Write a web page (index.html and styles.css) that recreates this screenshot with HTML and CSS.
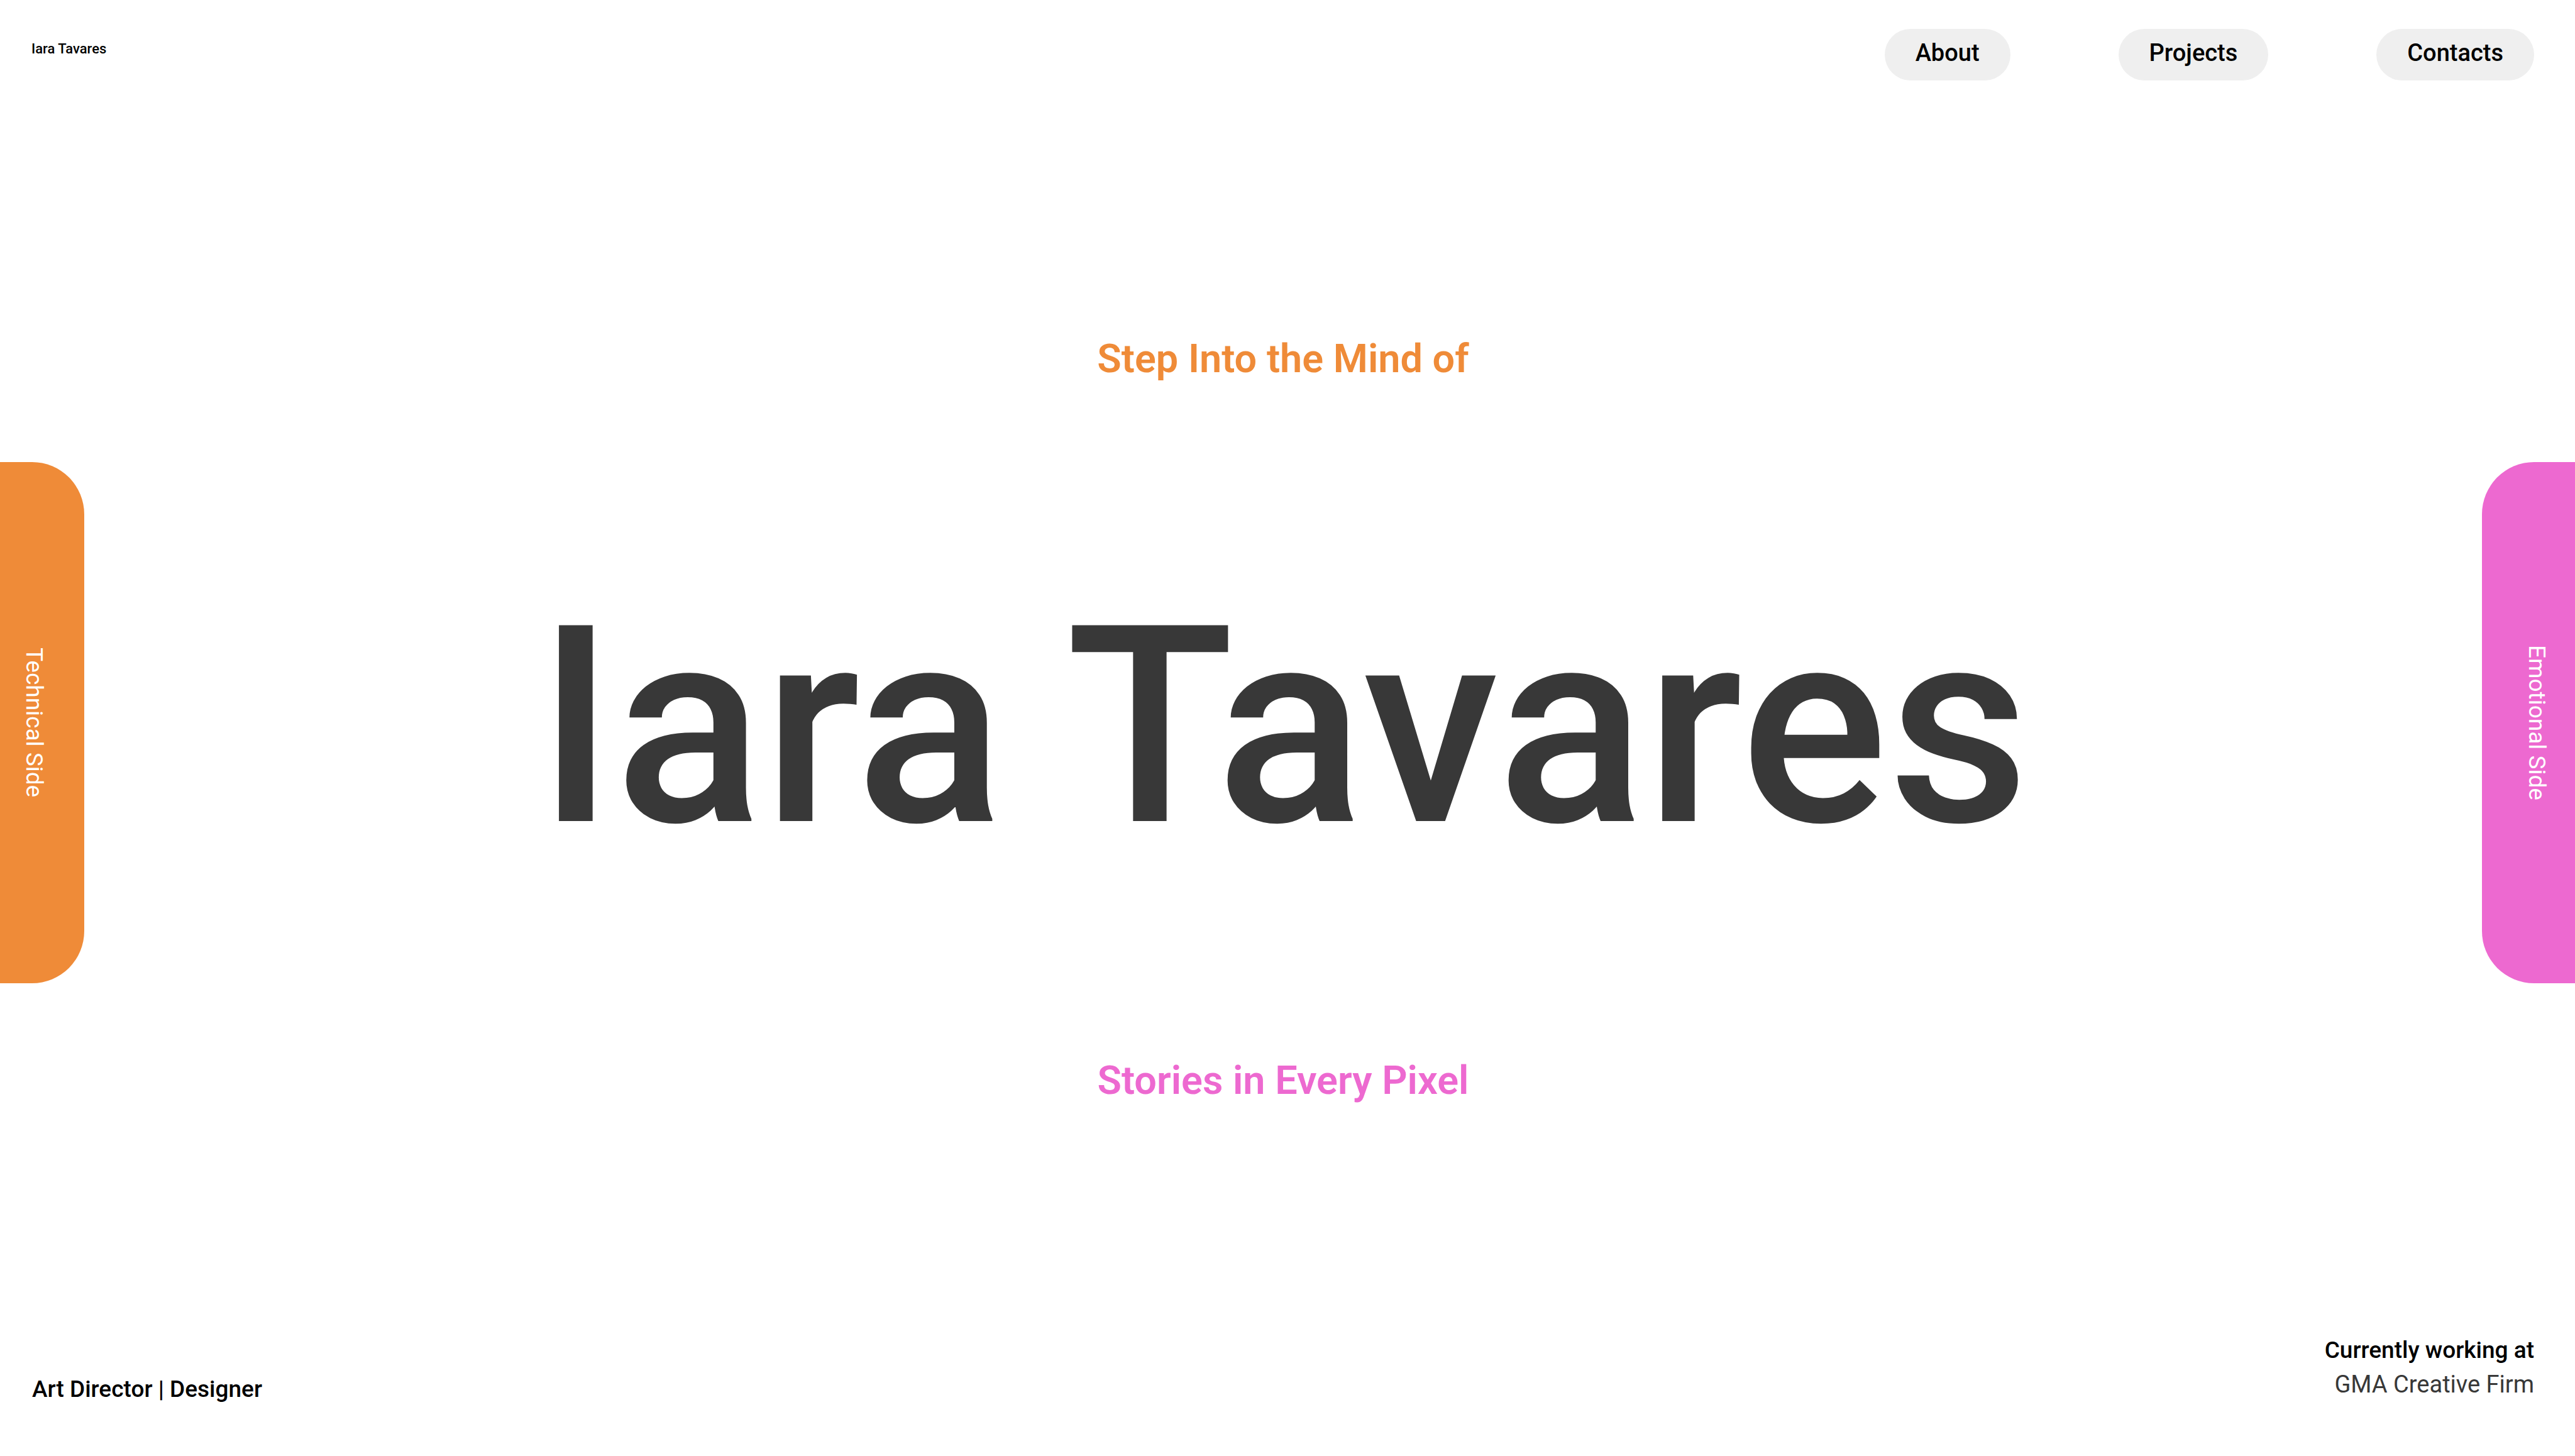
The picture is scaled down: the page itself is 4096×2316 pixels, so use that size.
FILE: index.html
```html
<!DOCTYPE html>
<html lang="en">
<head>
  <meta charset="utf-8">
  <meta name="viewport" content="width=device-width, initial-scale=1">
  <title>Iara Tavares</title>
  <link rel="stylesheet" href="styles.css">
</head>
<body class="page">
  <header class="header">
    <a class="brand" href="#">Iara Tavares</a>
    <nav class="nav">
      <a class="nav-link" href="#about">About</a>
      <a class="nav-link" href="#projects">Projects</a>
      <a class="nav-link" href="#contacts">Contacts</a>
    </nav>
  </header>

  <main class="main">
    <a class="side side-technical" href="#technical">Technical Side</a>
    <section class="hero">
      <p class="tagline tagline-orange">Step Into the Mind of</p>
      <h1 class="name">Iara Tavares</h1>
      <p class="tagline tagline-pink">Stories in Every Pixel</p>
    </section>
    <a class="side side-emotional" href="#emotional">Emotional Side</a>
  </main>

  <footer class="footer">
    <p class="role">Art Director | Designer</p>
    <div class="work">
      <p class="work-label">Currently working at</p>
      <a class="work-place" href="#gma">GMA Creative Firm</a>
    </div>
  </footer>
</body>
</html>
```
FILE: styles.css
```css
:root {
  --orange: #ef8b38;
  --pink: #ed69d0;
  --ink: #383838;
  --pill: #efefef;
}

* {
  box-sizing: border-box;
}

.page {
  margin: 0;
  min-height: 100vh;
  display: flex;
  flex-direction: column;
  background: #fff;
  color: #000;
  font-family: Roboto, "Liberation Sans", sans-serif;
  font-weight: 500;
}

a {
  color: inherit;
  text-decoration: none;
}

p,
h1 {
  margin: 0;
}

.header {
  display: flex;
  justify-content: space-between;
  align-items: flex-start;
  padding: 46px 65px 50px 50px;
}

.brand {
  padding-top: 19px;
  font-size: 22px;
  line-height: 26px;
}

.nav {
  display: flex;
  gap: 172px;
}

.nav-link {
  padding: 16px 49px 22px;
  border-radius: 41px;
  background: var(--pill);
  font-size: 38px;
  line-height: 44px;
}

.main {
  flex: 1;
  display: grid;
  grid-template-columns: auto 1fr auto;
  align-items: center;
}

.side {
  display: block;
  height: 829px;
  writing-mode: vertical-rl;
  text-align: center;
  color: #fff;
  font-size: 37px;
  font-weight: 400;
  line-height: 44px;
}

.side-technical {
  padding: 0 58px 0 32px;
  border-radius: 0 83px 83px 0;
  background: var(--orange);
}

.side-emotional {
  padding: 0 39px 0 65px;
  border-radius: 83px 0 0 83px;
  background: var(--pink);
}

.hero {
  display: flex;
  flex-direction: column;
  align-items: center;
  gap: 272px;
  padding-bottom: 10px;
}

.tagline {
  font-size: 63px;
  font-weight: 600;
  line-height: 74px;
}

.tagline-orange {
  color: var(--orange);
}

.tagline-pink {
  color: var(--pink);
}

.name {
  padding-top: 24px;
  color: var(--ink);
  font-size: 438px;
  font-weight: 500;
  line-height: 506px;
  white-space: nowrap;
}

.footer {
  display: flex;
  justify-content: space-between;
  align-items: flex-end;
  padding: 0 65px 79px 51px;
  font-size: 37px;
  line-height: 54px;
}

.work {
  padding-bottom: 8px;
  text-align: right;
}

.work-place {
  display: block;
  color: var(--ink);
  font-size: 38px;
  font-weight: 400;
}
```
